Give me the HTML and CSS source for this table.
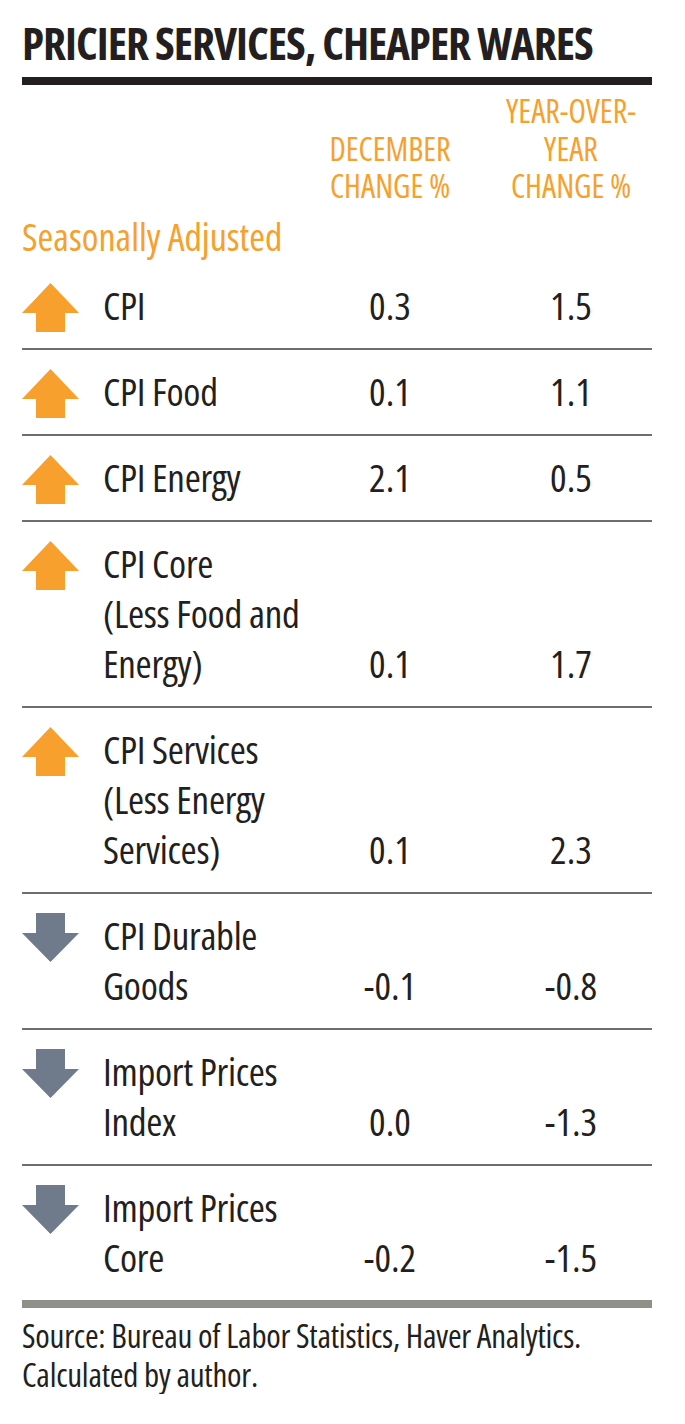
FILE: index.html
```html
<!DOCTYPE html>
<html lang="en">
<head>
<meta charset="utf-8">
<title>Pricier Services, Cheaper Wares</title>
<link rel="stylesheet" href="styles.css">
</head>
<body>
<main class="chart">
  <h1 class="title">PRICIER SERVICES, CHEAPER WARES</h1>
  <div class="rule-black"></div>

  <div class="head">
    <div class="head-spacer"></div>
    <div class="head-col head-c1">DECEMBER<br>CHANGE %</div>
    <div class="head-col head-c2">YEAR-OVER-<br>YEAR<br>CHANGE %</div>
  </div>
  <div class="subhead">Seasonally Adjusted</div>

  <div class="rows">
    <div class="row">
      <svg class="arrow" viewBox="0 0 57 49"><polygon class="up" points="28.5,0 57,30 43,30 43,49 14,49 14,30 0,30"/></svg>
      <div class="label">CPI</div>
      <div class="val v1">0.3</div>
      <div class="val v2">1.5</div>
    </div>
    <div class="row">
      <svg class="arrow" viewBox="0 0 57 49"><polygon class="up" points="28.5,0 57,30 43,30 43,49 14,49 14,30 0,30"/></svg>
      <div class="label">CPI Food</div>
      <div class="val v1">0.1</div>
      <div class="val v2">1.1</div>
    </div>
    <div class="row">
      <svg class="arrow" viewBox="0 0 57 49"><polygon class="up" points="28.5,0 57,30 43,30 43,49 14,49 14,30 0,30"/></svg>
      <div class="label">CPI Energy</div>
      <div class="val v1">2.1</div>
      <div class="val v2">0.5</div>
    </div>
    <div class="row">
      <svg class="arrow" viewBox="0 0 57 49"><polygon class="up" points="28.5,0 57,30 43,30 43,49 14,49 14,30 0,30"/></svg>
      <div class="label">CPI Core<br>(Less Food and<br>Energy)</div>
      <div class="val v1">0.1</div>
      <div class="val v2">1.7</div>
    </div>
    <div class="row">
      <svg class="arrow" viewBox="0 0 57 49"><polygon class="up" points="28.5,0 57,30 43,30 43,49 14,49 14,30 0,30"/></svg>
      <div class="label">CPI Services<br>(Less Energy<br>Services)</div>
      <div class="val v1">0.1</div>
      <div class="val v2">2.3</div>
    </div>
    <div class="row">
      <svg class="arrow" viewBox="0 0 57 49"><polygon class="down" points="14,0 43,0 43,20 57,20 28.5,49 0,20 14,20"/></svg>
      <div class="label">CPI Durable<br>Goods</div>
      <div class="val v1">-0.1</div>
      <div class="val v2">-0.8</div>
    </div>
    <div class="row">
      <svg class="arrow" viewBox="0 0 57 49"><polygon class="down" points="14,0 43,0 43,20 57,20 28.5,49 0,20 14,20"/></svg>
      <div class="label">Import Prices<br>Index</div>
      <div class="val v1">0.0</div>
      <div class="val v2">-1.3</div>
    </div>
    <div class="row row-last">
      <svg class="arrow" viewBox="0 0 57 49"><polygon class="down" points="14,0 43,0 43,20 57,20 28.5,49 0,20 14,20"/></svg>
      <div class="label">Import Prices<br>Core</div>
      <div class="val v1">-0.2</div>
      <div class="val v2">-1.5</div>
    </div>
  </div>

  <div class="rule-grey"></div>
  <p class="source">Source: Bureau of Labor Statistics, Haver Analytics.<br>Calculated by author.</p>
</main>
</body>
</html>
```
FILE: styles.css
```css
html, body {
  margin: 0;
  padding: 0;
  background: #ffffff;
}

body {
  font-family: "Open Sans", "Roboto Condensed", "Liberation Sans", sans-serif;
  font-stretch: 75%;
  color: #231f20;
}

.chart {
  width: 630px;
  padding: 18px 33px 0 22px;
}

.title {
  margin: 0;
  font-size: 45px;
  line-height: 50px;
  font-weight: 700;
  letter-spacing: -1px;
  white-space: nowrap;
}

.rule-black {
  height: 8px;
  margin-top: 9px;
  background: #231f20;
}

.head {
  display: grid;
  grid-template-columns: 306px 124px 1fr;
  align-items: end;
  padding-top: 7px;
  color: #f7a02c;
  font-size: 32px;
  line-height: 37.5px;
}

.head-col {
  text-align: center;
  white-space: nowrap;
}

.head-c2 {
  padding-left: 38px;
}

.subhead {
  margin-top: 9px;
  margin-bottom: 6px;
  color: #f7a02c;
  font-size: 38px;
  line-height: 44px;
}

.row {
  display: grid;
  grid-template-columns: 81px 225px 124px 1fr;
  align-items: end;
  padding: 16px 0 18px;
  border-bottom: 2px solid #6e6e6e;
  font-size: 39px;
  line-height: 50px;
}

.row-last {
  border-bottom: 0;
  padding-bottom: 18px;
}

.arrow {
  align-self: start;
  width: 57px;
  height: 49px;
  margin-top: 3px;
  margin-bottom: -3px;
  display: block;
}

.up {
  fill: #f8a02d;
}

.down {
  fill: #6f7b8a;
}

.label {
  white-space: nowrap;
  letter-spacing: -0.3px;
}

.val {
  text-align: center;
}

.v2 {
  padding-left: 38px;
}

.rule-grey {
  height: 8px;
  background: #8f9087;
}

.source {
  margin: 8px 0 0;
  font-size: 33px;
  line-height: 39px;
  letter-spacing: -0.25px;
}
```
